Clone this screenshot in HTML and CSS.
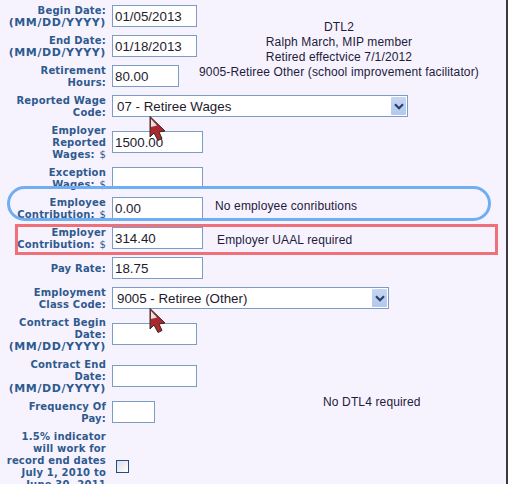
FILE: index.html
```html
<!DOCTYPE html>
<html lang="en">
<head>
<meta charset="utf-8">
<title>Retirement detail</title>
<link rel="stylesheet" href="styles.css">
</head>
<body>
<div class="page">
  <form class="form">
    <label class="lbl">Begin Date:<br><span class="fmt">(MM/DD/YYYY)</span></label>
    <input class="in in-date" value="01/05/2013">
    <div class="summary">DTL2<br>Ralph March, MIP member<br>Retired effectvice 7/1/2012<br>9005-Retiree Other (school improvement facilitator)</div>

    <label class="lbl">End Date:<br><span class="fmt">(MM/DD/YYYY)</span></label>
    <input class="in in-date" value="01/18/2013">

    <label class="lbl">Retirement<br>Hours:</label>
    <input class="in in-hours" value="80.00">

    <label class="lbl">Reported Wage<br>Code:</label>
    <div class="sel sel-wage">
      <select class="sel-native"><option>07 - Retiree Wages</option></select>
      <span class="sel-btn"><svg width="10" height="7" viewBox="0 0 10 7"><path d="M1 1.2 5 5.2 9 1.2" fill="none" stroke="#2c3f66" stroke-width="2.2"/></svg></span>
    </div>

    <label class="lbl">Employer<br>Reported<br>Wages: <span class="cur">$</span></label>
    <input class="in in-wide" value="1500.00">

    <label class="lbl">Exception<br>Wages: <span class="cur">$</span></label>
    <input class="in in-wide">

    <label class="lbl">Employee<br>Contribution: <span class="cur">$</span></label>
    <input class="in in-wide" value="0.00">
    <div class="note note-employee">No employee conributions</div>

    <label class="lbl">Employer<br>Contribution: <span class="cur">$</span></label>
    <input class="in in-wide" value="314.40">
    <div class="note note-employer">Employer UAAL required</div>

    <label class="lbl lbl-single">Pay Rate:</label>
    <input class="in in-wide" value="18.75">

    <label class="lbl">Employment<br>Class Code:</label>
    <div class="sel sel-class">
      <select class="sel-native"><option>9005 - Retiree (Other)</option></select>
      <span class="sel-btn"><svg width="10" height="7" viewBox="0 0 10 7"><path d="M1 1.2 5 5.2 9 1.2" fill="none" stroke="#2c3f66" stroke-width="2.2"/></svg></span>
    </div>

    <label class="lbl">Contract Begin<br>Date:<br><span class="fmt">(MM/DD/YYYY)</span></label>
    <input class="in in-date">

    <label class="lbl">Contract End<br>Date:<br><span class="fmt">(MM/DD/YYYY)</span></label>
    <input class="in in-date">

    <label class="lbl">Frequency Of<br>Pay:</label>
    <input class="in in-freq">
    <div class="note note-dtl4">No DTL4 required</div>

    <label class="lbl">1.5% indicator<br>will work for<br>record end dates<br>July 1, 2010 to<br>June 30, 2011</label>
    <span class="check"></span>
  </form>

  <div class="oval"></div>
  <div class="redbox"></div>

  <svg class="cursor cursor-a" width="17" height="26" viewBox="0 0 17 26"><path d="M1 .5V21L5 17 9 24.5 13 22.5 10 16 16 15Z" fill="#a82a2e" stroke="#3a2626" stroke-width="1"/><path d="M2 3V11L8 9.500Z" fill="#e6e2e2"/></svg>
  <svg class="cursor cursor-b" width="17" height="26" viewBox="0 0 17 26"><path d="M1 .5V21L5 17 9 24.5 13 22.5 10 16 16 15Z" fill="#a82a2e" stroke="#3a2626" stroke-width="1"/><path d="M2 3V11L8 9.500Z" fill="#e6e2e2"/></svg>

  <div class="scrollbar"></div>
</div>
</body>
</html>
```

FILE: styles.css
```css
html, body {
  margin: 0;
  padding: 0;
  height: 100%;
  overflow: hidden;
  background: #fff;
}

.page {
  position: relative;
  width: 510px;
  height: 484px;
  overflow: hidden;
  background: #f6f3fe;
  font-family: "Liberation Sans", Arial, sans-serif;
  color: #241a3c;
}

.form {
  display: grid;
  grid-template-columns: 106px 97px 1fr;
  padding-top: 1px;
  width: 479px;
  align-items: center;
}

.lbl {
  grid-column: 1;
  padding: 4px 0 2px;
  display: block;
  text-align: right;
  font-family: "DejaVu Sans", Verdana, sans-serif;
  font-weight: 700;
  font-size: 10px;
  line-height: 12px;
  letter-spacing: 0.2px;
  color: #2f5a8e;
  white-space: nowrap;
}

.lbl-single { line-height: 24px; }

.fmt {
  font-size: 11px;
  letter-spacing: 0.6px;
}

.cur {
  font-weight: 400;
  margin-left: 1px;
}

.in {
  grid-column: 2;
  margin-left: 6px;
  box-sizing: border-box;
  height: 22px;
  border: 1px solid #7b9cc4;
  background: #fff;
  padding: 0 2px;
  font: 13.33px "Liberation Sans", Arial, sans-serif;
  color: #241a2c;
  outline: none;
}

.in-date { width: 85px; }
.in-hours { width: 67px; }
.in-wide { width: 91px; }
.in-freq { width: 43px; }

.sel {
  position: relative;
  grid-column: 2 / span 2;
  margin-left: 6px;
  height: 22px;
}

.sel-wage { width: 296px; }
.sel-class { width: 277px; }

.sel-native {
  appearance: none;
  -webkit-appearance: none;
  display: block;
  box-sizing: border-box;
  width: 100%;
  height: 22px;
  border: 1px solid #7b9cc4;
  border-radius: 0;
  background: #fff;
  padding: 0 0 0 4px;
  font: 13.33px "Liberation Sans", Arial, sans-serif;
  color: #241a2c;
}

.sel-btn {
  position: absolute;
  top: 2px;
  right: 2px;
  width: 15px;
  height: 18px;
  display: flex;
  align-items: center;
  justify-content: center;
  background: linear-gradient(#c6d6f4, #b2c8ef);
  border-radius: 1px;
}

.summary {
  grid-column: 3;
  grid-row: 1 / span 3;
  margin-left: -4px;
  margin-top: 8px;
  text-align: center;
  font-size: 12px;
  letter-spacing: 0.14px;
  line-height: 15px;
  white-space: nowrap;
}

.note {
  grid-column: 3;
  font-size: 12px;
  letter-spacing: 0.14px;
  line-height: 15px;
  white-space: nowrap;
}

.note-employee { margin-left: 12px; margin-top: -3px; }
.note-employer { margin-left: 14px; margin-top: 5px; }
.note-dtl4 { margin-left: 120px; margin-top: -2px; align-self: start; }

.check {
  grid-column: 2;
  margin-left: 10px;
  margin-top: 12px;
  box-sizing: border-box;
  width: 13px;
  height: 13px;
  border: 1px solid #1f4f86;
  background: linear-gradient(135deg, #dcdce2, #fff);
}

.oval {
  position: absolute;
  left: 7px;
  top: 186px;
  width: 484px;
  height: 35px;
  box-sizing: border-box;
  border: 3px solid #70aef4;
  border-radius: 18px;
}

.redbox {
  position: absolute;
  left: 15px;
  top: 224px;
  width: 483px;
  height: 31px;
  box-sizing: border-box;
  border: 3px solid #ef7079;
}

.cursor { position: absolute; left: 149px; }
.cursor-a { top: 116px; }
.cursor-b { top: 308px; }

.scrollbar {
  position: absolute;
  left: 506px;
  top: 0;
  width: 4px;
  height: 484px;
  box-sizing: border-box;
  background: #fff;
  border-left: 2px solid #3a3a40;
}
```
